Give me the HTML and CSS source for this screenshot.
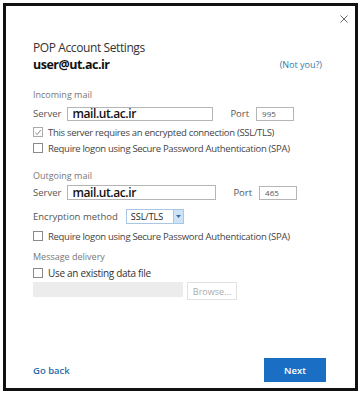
FILE: index.html
```html
<!DOCTYPE html>
<html>
<head>
<meta charset="utf-8">
<link rel="stylesheet" href="styles.css">
</head>
<body>
<div class="dialog">
  <div class="close-row">
    <svg class="close" width="8" height="8" viewBox="0 0 8 8"><path d="M0.5 0.5 L7.5 7.5 M7.5 0.5 L0.5 7.5" stroke="#666" stroke-width="1" fill="none"/></svg>
  </div>
  <div class="content">
    <div class="title">POP Account Settings</div>
    <div class="user-row">
      <span class="user">user@ut.ac.ir</span>
      <span class="notyou">(Not you?)</span>
    </div>

    <div class="section s-in">Incoming mail</div>
    <div class="server-row r-in">
      <span class="lbl">Server</span>
      <span class="input server-in in1">mail.ut.ac.ir</span>
      <span class="lbl port-lbl p1">Port</span>
      <span class="input port-in">995</span>
    </div>
    <div class="check-row c1">
      <span class="cbox checked"><svg width="9" height="9" viewBox="0 0 9 9"><path d="M1.5 4.8 L3.6 6.8 L7.6 1.8" stroke="#777" stroke-width="1" fill="none"/></svg></span>
      <span class="clabel">This server requires an encrypted connection (SSL/TLS)</span>
    </div>
    <div class="check-row c2">
      <span class="cbox"></span>
      <span class="clabel">Require logon using Secure Password Authentication (SPA)</span>
    </div>

    <div class="section s-out">Outgoing mail</div>
    <div class="server-row r-out">
      <span class="lbl">Server</span>
      <span class="input server-in in2">mail.ut.ac.ir</span>
      <span class="lbl port-lbl p2">Port</span>
      <span class="input port-in">465</span>
    </div>
    <div class="enc-row">
      <span class="lbl">Encryption method</span>
      <span class="select"><span class="sel-val">SSL/TLS</span><span class="sel-btn"><svg width="5" height="3" viewBox="0 0 5 3"><path d="M0 0 H5 L2.5 3 Z" fill="#3a6ea5"/></svg></span></span>
    </div>
    <div class="check-row c3">
      <span class="cbox"></span>
      <span class="clabel">Require logon using Secure Password Authentication (SPA)</span>
    </div>

    <div class="section s-del">Message delivery</div>
    <div class="check-row c4">
      <span class="cbox"></span>
      <span class="clabel big">Use an existing data file</span>
    </div>
    <div class="file-row">
      <span class="file-in"></span>
      <span class="browse">Browse...</span>
    </div>
  </div>
  <div class="footer">
    <span class="goback">Go back</span>
    <span class="next">Next</span>
  </div>
</div>
</body>
</html>
```

FILE: styles.css
```css
html, body {
  margin: 0;
  padding: 0;
  background: #fff;
}
body {
  font-family: "Open Sans", "Noto Sans", sans-serif;
  color: #555;
}
.dialog {
  box-sizing: border-box;
  margin: 3px 0 0 3px;
  width: 355px;
  height: 388px;
  border: 3px solid #111;
  display: flex;
  flex-direction: column;
}
.close-row {
  height: 34px;
  box-sizing: border-box;
  display: flex;
  justify-content: flex-end;
  align-items: flex-start;
  padding: 9px 7px 0 0;
}
.close { display: block; }
.content {
  padding: 0 0 0 27px;
  display: flex;
  flex-direction: column;
}
.title {
  margin-top: 0;
  font-size: 12px;
  line-height: 15px;
  height: 15px;
  color: #333;
  letter-spacing: -0.4px;
}
.user-row {
  margin-top: 2px;
  display: flex;
  align-items: center;
  height: 15px;
  padding-right: 33px;
  justify-content: space-between;
}
.user {
  font-size: 12.5px;
  line-height: 15px;
  font-weight: 700;
  color: #111;
  letter-spacing: -0.5px;
}
.notyou {
  font-size: 9px;
  line-height: 12px;
  color: #2f7ab0;
}
.section {
  font-size: 9px;
  line-height: 13px;
  color: #777;
}
.s-in { margin-top: 16px; }
.s-out { margin-top: 15px; }
.s-del { margin-top: 8px; }
.server-row {
  display: flex;
  align-items: center;
  height: 15px;
}
.r-in { margin-top: 5px; }
.r-out { margin-top: 3px; }
.lbl {
  font-size: 9.5px;
  color: #555;
}
.input {
  box-sizing: border-box;
  height: 14px;
  border: 1px solid #b5b5b5;
  display: flex;
  align-items: center;
  background: #fff;
}
.server-in {
  margin-left: 6px;
  padding-left: 4px;
  font-size: 12px;
  font-weight: 600;
  color: #111;
  letter-spacing: -0.4px;
}
.in1 { width: 146px; }
.in2 { width: 149px; height: 15px; }
.port-lbl { margin-right: 7px; }
.p1 { margin-left: 17px; }
.p2 { margin-left: 17px; }
.port-in {
  width: 38px;
  padding-left: 5px;
  font-size: 8px;
  color: #555;
}
.check-row {
  display: flex;
  align-items: center;
  height: 12px;
}
.c1 { margin-top: 5px; }
.c2 { margin-top: 4px; }
.c3 { margin-top: 7px; }
.c4 { margin-top: 4px; }
.cbox {
  box-sizing: border-box;
  width: 10px;
  height: 10px;
  border: 1px solid #8a8a8a;
  margin-right: 5px;
  display: flex;
  align-items: center;
  justify-content: center;
}
.cbox.checked { border-color: #aaa; }
.cbox svg { display: block; }
.clabel {
  font-size: 9.5px;
  color: #444;
  letter-spacing: -0.3px;
}
.clabel.big { font-size: 10px; color: #333; }
.enc-row {
  margin-top: 9px;
  display: flex;
  align-items: center;
  height: 14px;
}
.select {
  margin-left: 8px;
  box-sizing: border-box;
  width: 58px;
  height: 15px;
  border: 1px solid #a9c6e4;
  display: flex;
  align-items: stretch;
}
.sel-val {
  flex: 1;
  font-size: 9px;
  color: #222;
  padding-left: 4px;
  display: flex;
  align-items: center;
}
.sel-btn {
  width: 9px;
  background: #cfe3f6;
  border-left: 1px solid #a9c6e4;
  display: flex;
  align-items: center;
  justify-content: center;
}
.file-row {
  margin-top: 3px;
  display: flex;
  align-items: flex-start;
  height: 18px;
}
.file-in {
  width: 150px;
  height: 15px;
  background: #ececec;
}
.browse {
  box-sizing: border-box;
  margin-left: 4px;
  width: 50px;
  height: 18px;
  border: 1px solid #e2e2e2;
  font-size: 9px;
  color: #aaa;
  display: flex;
  align-items: center;
  justify-content: center;
}
.footer {
  margin-top: auto;
  display: flex;
  justify-content: space-between;
  align-items: center;
  padding: 0 29px 6px 27px;
}
.goback {
  font-size: 9.5px;
  color: #2a6ca8;
  font-weight: 600;
}
.next {
  width: 62px;
  height: 24px;
  background: #1a6fc4;
  color: #fff;
  font-size: 9.5px;
  font-weight: 600;
  display: flex;
  align-items: center;
  justify-content: center;
}
```
